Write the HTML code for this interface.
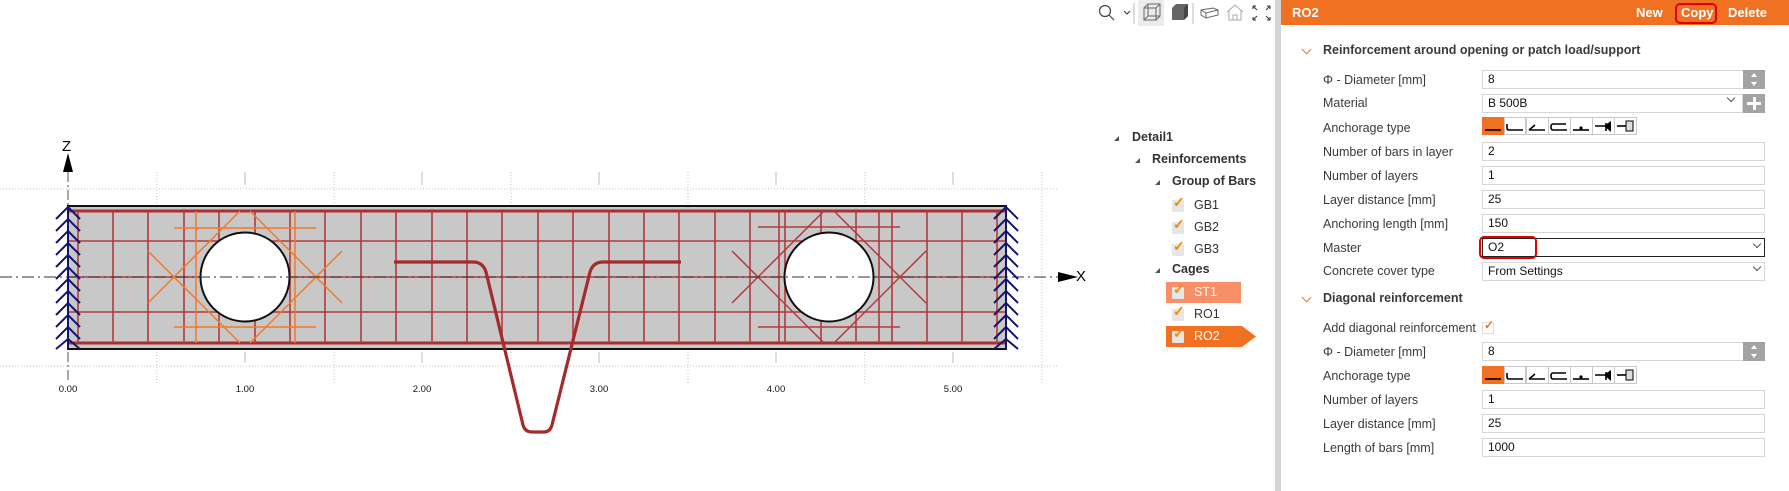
<!DOCTYPE html>
<html><head><meta charset="utf-8">
<style>
*{margin:0;padding:0;box-sizing:border-box}
body{width:1789px;height:491px;background:#fff;position:relative;overflow:hidden;font-family:"Liberation Sans",sans-serif;color:#333}
.a{position:absolute}
.lbl{position:absolute;left:1323px;font-size:12.5px;color:#3a3a3a;line-height:16px}
.inp{position:absolute;left:1482px;width:283px;height:19px;border:1px solid #d6d6d6;font-size:12px;line-height:17px;padding-left:5px;color:#111;background:#fff}
.sec{position:absolute;left:1323px;font-size:12.5px;font-weight:bold;color:#3a3a3a}
.chev{position:absolute;left:1303px;width:7px;height:7px;border-right:1.3px solid #f07122;border-bottom:1.3px solid #f07122;transform:rotate(45deg)}
.tr{position:absolute;font-size:12.5px;color:#333}
.cb{position:absolute;width:12px;height:12px;background:#e6e6e6;border-radius:1px}
</style></head><body>

<svg class="a" style="left:0;top:0" width="1275" height="491" xmlns="http://www.w3.org/2000/svg">
 <!-- grid dotted -->
 <g stroke="#c4c4c4" stroke-width="1" stroke-dasharray="1,2">
  <line x1="0" y1="189" x2="1058" y2="189"/>
  <line x1="0" y1="366" x2="1058" y2="366"/>
  <line x1="157" y1="172" x2="157" y2="383"/>
  <line x1="334" y1="172" x2="334" y2="383"/>
  <line x1="511" y1="172" x2="511" y2="383"/>
  <line x1="688" y1="172" x2="688" y2="383"/>
  <line x1="865" y1="172" x2="865" y2="383"/>
  <line x1="1042" y1="172" x2="1042" y2="383"/>
 </g>
 <g stroke="#bdbdbd" stroke-width="1">
  <line x1="245" y1="172" x2="245" y2="185"/><line x1="245" y1="352" x2="245" y2="363"/>
  <line x1="422" y1="172" x2="422" y2="185"/><line x1="422" y1="352" x2="422" y2="363"/>
  <line x1="599" y1="172" x2="599" y2="185"/><line x1="599" y1="352" x2="599" y2="363"/>
  <line x1="776" y1="172" x2="776" y2="185"/><line x1="776" y1="352" x2="776" y2="363"/>
  <line x1="953" y1="172" x2="953" y2="185"/><line x1="953" y1="352" x2="953" y2="363"/>
 </g>
 <line x1="68" y1="172" x2="68" y2="383" stroke="#555" stroke-dasharray="10,3,2,3"/>
 <!-- beam -->
 <rect x="68" y="206" width="938" height="143" fill="#c8c8c8" stroke="#111" stroke-width="2"/>
 <!-- red grid -->
 <g stroke="#b23a3a" stroke-width="1.6">
  <line x1="68" y1="241" x2="1006" y2="241"/>
  <line x1="68" y1="312" x2="1006" y2="312"/>
  <line x1="68" y1="277" x2="1006" y2="277"/>
 </g>
 <g stroke="#ab2f2f" stroke-width="3">
  <line x1="68" y1="211" x2="1006" y2="211"/>
  <line x1="68" y1="343" x2="1006" y2="343"/>
 </g>
 <g stroke="#b23a3a" stroke-width="1.6" id="verts">
  <line x1="78" y1="211" x2="78" y2="343"/><line x1="113" y1="211" x2="113" y2="343"/><line x1="148" y1="211" x2="148" y2="343"/><line x1="184" y1="211" x2="184" y2="343"/><line x1="219" y1="211" x2="219" y2="343"/><line x1="255" y1="211" x2="255" y2="343"/><line x1="290" y1="211" x2="290" y2="343"/><line x1="325" y1="211" x2="325" y2="343"/><line x1="361" y1="211" x2="361" y2="343"/><line x1="396" y1="211" x2="396" y2="343"/><line x1="432" y1="211" x2="432" y2="343"/><line x1="467" y1="211" x2="467" y2="343"/><line x1="502" y1="211" x2="502" y2="343"/><line x1="538" y1="211" x2="538" y2="343"/><line x1="573" y1="211" x2="573" y2="343"/><line x1="609" y1="211" x2="609" y2="343"/><line x1="644" y1="211" x2="644" y2="343"/><line x1="679" y1="211" x2="679" y2="343"/><line x1="715" y1="211" x2="715" y2="343"/><line x1="750" y1="211" x2="750" y2="343"/><line x1="779" y1="211" x2="779" y2="343"/><line x1="785" y1="211" x2="785" y2="343"/><line x1="821" y1="211" x2="821" y2="343"/><line x1="856" y1="211" x2="856" y2="343"/><line x1="879" y1="211" x2="879" y2="343"/><line x1="892" y1="211" x2="892" y2="343"/><line x1="927" y1="211" x2="927" y2="343"/><line x1="962" y1="211" x2="962" y2="343"/><line x1="997" y1="211" x2="997" y2="343"/>
 </g>
 <!-- orange cage hole 1 -->
 <g stroke="#f07a2a" stroke-width="1.5">
  <line x1="174" y1="228" x2="316" y2="228"/><line x1="174" y1="327" x2="316" y2="327"/>
  <line x1="196" y1="211" x2="196" y2="343"/><line x1="295" y1="211" x2="295" y2="343"/>
  <line x1="148" y1="251" x2="240" y2="343"/><line x1="148" y1="303" x2="240" y2="211"/>
  <line x1="342" y1="251" x2="250" y2="343"/><line x1="342" y1="303" x2="250" y2="211"/>
 </g>
 <!-- red cage hole 2 -->
 <g stroke="#b23a3a" stroke-width="1.5">
  <line x1="758" y1="227" x2="900" y2="227"/><line x1="758" y1="327" x2="900" y2="327"/>
  <line x1="732" y1="251" x2="824" y2="343"/><line x1="732" y1="303" x2="824" y2="211"/>
  <line x1="926" y1="251" x2="834" y2="343"/><line x1="926" y1="303" x2="834" y2="211"/>
 </g>
 <!-- holes -->
 <circle cx="245" cy="277" r="44.5" fill="#fff" stroke="#111" stroke-width="2"/>
 <circle cx="829" cy="277" r="44.5" fill="#fff" stroke="#111" stroke-width="2"/>
 <!-- axis -->
 <line x1="0" y1="277" x2="1066" y2="277" stroke="#333" stroke-width="1" stroke-dasharray="12,4,2,4"/>
 <polygon points="1058,272 1078,277 1058,282" fill="#000"/>
 <text x="1076" y="277" font-size="15" font-family="Liberation Sans" fill="#000" dominant-baseline="middle">X</text>
 <polygon points="63,172 68,153 73,172" fill="#000"/>
 <text x="62" y="151" font-size="15" font-family="Liberation Sans" fill="#000">Z</text>
 <!-- V bar -->
 <path d="M394 262 H473 Q483 262 486 272 L523 425 Q525 432 532 432 H544 Q550 432 552 425 L590 272 Q593 262 603 262 H681" fill="none" stroke="#a52a2a" stroke-width="3.2" stroke-linejoin="round"/>
 <!-- supports -->
 <g fill="none" stroke="#14146e" stroke-width="2">
  <line x1="68" y1="206" x2="68" y2="349"/>
  <line x1="1006" y1="206" x2="1006" y2="349"/>
  <path d="M56 219 L68 207 L80 219 M56 231 L68 219 L80 231 M56 243 L68 231 L80 243 M56 255 L68 243 L80 255 M56 267 L68 255 L80 267 M56 279 L68 267 L80 279 M56 291 L68 279 L80 291 M56 303 L68 291 L80 303 M56 315 L68 303 L80 315 M56 327 L68 315 L80 327 M56 339 L68 327 L80 339 M56 349 L68 339 L80 349"/>
  <path transform="translate(938,0)" d="M56 219 L68 207 L80 219 M56 231 L68 219 L80 231 M56 243 L68 231 L80 243 M56 255 L68 243 L80 255 M56 267 L68 255 L80 267 M56 279 L68 267 L80 279 M56 291 L68 279 L80 291 M56 303 L68 291 L80 303 M56 315 L68 303 L80 315 M56 327 L68 315 L80 327 M56 339 L68 327 L80 339 M56 349 L68 339 L80 349"/>
 </g>
 <g font-size="9.5" font-family="Liberation Sans" fill="#111" text-anchor="middle">
  <text x="68" y="392">0.00</text><text x="245" y="392">1.00</text><text x="422" y="392">2.00</text><text x="599" y="392">3.00</text><text x="776" y="392">4.00</text><text x="953" y="392">5.00</text>
 </g>
 <!-- toolbar -->
 <rect x="1138" y="0" width="26" height="26" fill="#ebebeb"/>
 <g fill="none" stroke="#444" stroke-width="1.2">
  <circle cx="1105" cy="11" r="5.5"/><line x1="1109" y1="15" x2="1114" y2="20"/>
  <polyline points="1124,11 1127,14 1130,11"/>
 </g>
 <line x1="1134" y1="3" x2="1134" y2="24" stroke="#bbb"/>
 <line x1="1193" y1="3" x2="1193" y2="24" stroke="#bbb"/>
 <g fill="none" stroke="#666" stroke-width="1">
  <rect x="1144" y="8" width="12" height="12"/><polyline points="1144,8 1148,4 1160,4 1160,16 1156,20"/><line x1="1156" y1="8" x2="1160" y2="4"/>
  <polyline points="1148,4 1148,16 1144,20"/><line x1="1148" y1="16" x2="1160" y2="16"/>
  <path d="M1201 10 L1213 8 L1218 10 L1218 15 L1206 18 L1201 15 Z M1201 10 L1206 13 L1218 10 M1206 13 L1206 18"/>
 </g>
 <path d="M1172 8 L1176 4 L1188 4 L1188 16 L1184 20 L1172 20 Z" fill="#666"/>
 <path d="M1184 8 L1188 4 L1188 16 L1184 20 Z" fill="#444"/>
 <path d="M1227 12 L1235 5 L1243 12 M1229 10 V20 H1241 V10 M1233 20 V15 H1237 V20" fill="none" stroke="#aaa" stroke-width="1"/>
 <g fill="none" stroke="#333" stroke-width="1">
  <path d="M1253 6 L1257 10 M1253 6 H1256 M1253 6 V9"/>
  <path d="M1270 6 L1266 10 M1270 6 H1267 M1270 6 V9"/>
  <path d="M1253 20 L1257 16 M1253 20 H1256 M1253 20 V17"/>
  <path d="M1270 20 L1266 16 M1270 20 H1267 M1270 20 V17"/>
 </g>
 <!-- tree -->
 <g fill="#555"><polygon points="1114,141 1119,136 1119,141"/><polygon points="1135,163 1140,158 1140,163"/><polygon points="1155,185 1160,180 1160,185"/><polygon points="1155,273 1160,268 1160,273"/></g>
 <rect x="1166" y="282" width="75" height="21" fill="#f79068"/>
 <polygon points="1166,326 1242,326 1256,336.5 1242,347 1166,347" fill="#f07122"/>
</svg>

<div class="tr" style="left:1132px;top:130px;font-weight:bold">Detail1</div>
<div class="tr" style="left:1152px;top:152px;font-weight:bold">Reinforcements</div>
<div class="tr" style="left:1172px;top:174px;font-weight:bold">Group of Bars</div>
<div class="tr" style="left:1172px;top:262px;font-weight:bold">Cages</div>
<div class="cb" style="left:1172px;top:200px"></div><div class="tr" style="left:1173px;top:194px;color:#f08a00;font-size:14px;font-weight:bold">✓</div><div class="tr" style="left:1194px;top:198px">GB1</div>
<div class="cb" style="left:1172px;top:222px"></div><div class="tr" style="left:1173px;top:216px;color:#f08a00;font-size:14px;font-weight:bold">✓</div><div class="tr" style="left:1194px;top:220px">GB2</div>
<div class="cb" style="left:1172px;top:244px"></div><div class="tr" style="left:1173px;top:238px;color:#f08a00;font-size:14px;font-weight:bold">✓</div><div class="tr" style="left:1194px;top:242px">GB3</div>
<div class="cb" style="left:1172px;top:287px"></div><div class="tr" style="left:1173px;top:281px;color:#f08a00;font-size:14px;font-weight:bold">✓</div><div class="tr" style="left:1194px;top:285px;color:#fff">ST1</div>
<div class="cb" style="left:1172px;top:309px"></div><div class="tr" style="left:1173px;top:303px;color:#f08a00;font-size:14px;font-weight:bold">✓</div><div class="tr" style="left:1194px;top:307px">RO1</div>
<div class="cb" style="left:1172px;top:331px"></div><div class="tr" style="left:1173px;top:325px;color:#f08a00;font-size:14px;font-weight:bold">✓</div><div class="tr" style="left:1194px;top:329px;color:#fff">RO2</div>

<!-- panel -->
<div class="a" style="left:1275px;top:0;width:6px;height:491px;background:#d4d4d4"></div>
<div class="a" style="left:1281px;top:0;width:508px;height:25px;background:#f07122"></div>
<div class="a" style="left:1292px;top:5px;color:#fff;font-weight:bold;font-size:13px">RO2</div>
<div class="a" style="left:1636px;top:5px;color:#fff;font-weight:bold;font-size:13px">New</div>
<div class="a" style="left:1675px;top:3px;width:42px;height:21px;border:2.5px solid #e00000;border-radius:5px"></div>
<div class="a" style="left:1681px;top:5px;color:#fff;font-weight:bold;font-size:13px">Copy</div>
<div class="a" style="left:1728px;top:5px;color:#fff;font-weight:bold;font-size:13px">Delete</div>

<div class="chev" style="top:46px"></div>
<div class="sec" style="top:43px">Reinforcement around opening or patch load/support</div>

<div class="lbl" style="top:72px">Φ - Diameter [mm]</div><div class="inp" style="top:70px">8</div>
<div class="a" style="left:1743px;top:70px;width:22px;height:19px;background:#a3a3a3"></div>
<div class="a" style="left:1751px;top:73px;border:3px solid transparent;border-bottom:4px solid #fff;border-top:0"></div>
<div class="a" style="left:1751px;top:82px;border:3px solid transparent;border-top:4px solid #fff;border-bottom:0"></div>

<div class="lbl" style="top:95px">Material</div><div class="inp" style="top:94px;width:261px">B 500B</div>
<div class="a" style="left:1728px;top:95px;width:6px;height:6px;border-right:1px solid #555;border-bottom:1px solid #555;transform:rotate(45deg)"></div>
<div class="a" style="left:1743px;top:94px;width:22px;height:19px;background:#a3a3a3"></div>
<div class="a" style="left:1747px;top:102px;width:14px;height:3px;background:#fff"></div>
<div class="a" style="left:1752.5px;top:97px;width:3px;height:13px;background:#fff"></div>

<div class="lbl" style="top:120px">Anchorage type</div>
<svg class="a" style="left:1482px;top:117px" width="156" height="18" xmlns="http://www.w3.org/2000/svg">
 <rect x="0" y="0" width="22" height="18" fill="#f07122"/>
 <g fill="none" stroke="#c8c8c8"><rect x="22.5" y="0.5" width="21" height="17"/><rect x="44.5" y="0.5" width="22" height="17"/><rect x="66.5" y="0.5" width="22" height="17"/><rect x="88.5" y="0.5" width="22" height="17"/><rect x="110.5" y="0.5" width="22" height="17"/><rect x="132.5" y="0.5" width="22" height="17"/></g>
 <g fill="none" stroke="#000" stroke-width="1.6">
  <line x1="3" y1="13" x2="19" y2="13"/>
  <path d="M25 7 V11 Q25 13 27 13 H41"/>
  <path d="M47 13 L53 8 M47 13 H63"/>
  <path d="M84 7 H71 Q69 7 69 10 Q69 13 71 13 H85"/>
  <path d="M91 13 H107"/>
  <path d="M113 9 H124 M124 6 V14"/>
  <path d="M135 9 H144"/>
 </g>
 <circle cx="99" cy="11" r="1.6" fill="#000"/>
 <path d="M122 9 L129 4 V15 Z" fill="#000"/>
 <rect x="144" y="4" width="7" height="10" fill="#ddd" stroke="#000"/>
</svg>

<div class="lbl" style="top:144px">Number of bars in layer</div><div class="inp" style="top:142px">2</div>
<div class="lbl" style="top:168px">Number of layers</div><div class="inp" style="top:166px">1</div>
<div class="lbl" style="top:192px">Layer distance [mm]</div><div class="inp" style="top:190px">25</div>
<div class="lbl" style="top:216px">Anchoring length [mm]</div><div class="inp" style="top:214px">150</div>
<div class="lbl" style="top:240px">Master</div><div class="inp" style="top:238px;border-color:#222">O2</div>
<div class="a" style="left:1754px;top:241px;width:6px;height:6px;border-right:1px solid #555;border-bottom:1px solid #555;transform:rotate(45deg)"></div>
<div class="a" style="left:1479px;top:236px;width:58px;height:23px;border:2.5px solid #e00000;border-radius:5px"></div>
<div class="lbl" style="top:263px">Concrete cover type</div><div class="inp" style="top:262px">From Settings</div>
<div class="a" style="left:1754px;top:264px;width:6px;height:6px;border-right:1px solid #555;border-bottom:1px solid #555;transform:rotate(45deg)"></div>

<div class="chev" style="top:294px"></div>
<div class="sec" style="top:291px">Diagonal reinforcement</div>
<div class="lbl" style="top:320px">Add diagonal reinforcement</div>
<div class="a" style="left:1482px;top:322px;width:12px;height:12px;border:1px solid #ddd"></div>
<div class="a" style="left:1484px;top:318px;color:#f07122;font-size:12px;font-weight:bold">✓</div>
<div class="lbl" style="top:344px">Φ - Diameter [mm]</div><div class="inp" style="top:342px">8</div>
<div class="a" style="left:1743px;top:342px;width:22px;height:19px;background:#a3a3a3"></div>
<div class="a" style="left:1751px;top:345px;border:3px solid transparent;border-bottom:4px solid #fff;border-top:0"></div>
<div class="a" style="left:1751px;top:354px;border:3px solid transparent;border-top:4px solid #fff;border-bottom:0"></div>
<div class="lbl" style="top:368px">Anchorage type</div>
<svg class="a" style="left:1482px;top:366px" width="156" height="18" xmlns="http://www.w3.org/2000/svg">
 <rect x="0" y="0" width="22" height="18" fill="#f07122"/>
 <g fill="none" stroke="#c8c8c8"><rect x="22.5" y="0.5" width="21" height="17"/><rect x="44.5" y="0.5" width="22" height="17"/><rect x="66.5" y="0.5" width="22" height="17"/><rect x="88.5" y="0.5" width="22" height="17"/><rect x="110.5" y="0.5" width="22" height="17"/><rect x="132.5" y="0.5" width="22" height="17"/></g>
 <g fill="none" stroke="#000" stroke-width="1.6">
  <line x1="3" y1="13" x2="19" y2="13"/>
  <path d="M25 7 V11 Q25 13 27 13 H41"/>
  <path d="M47 13 L53 8 M47 13 H63"/>
  <path d="M84 7 H71 Q69 7 69 10 Q69 13 71 13 H85"/>
  <path d="M91 13 H107"/>
  <path d="M113 9 H124 M124 6 V14"/>
  <path d="M135 9 H144"/>
 </g>
 <circle cx="99" cy="11" r="1.6" fill="#000"/>
 <path d="M122 9 L129 4 V15 Z" fill="#000"/>
 <rect x="144" y="4" width="7" height="10" fill="#ddd" stroke="#000"/>
</svg>
<div class="lbl" style="top:392px">Number of layers</div><div class="inp" style="top:390px">1</div>
<div class="lbl" style="top:416px">Layer distance [mm]</div><div class="inp" style="top:414px">25</div>
<div class="lbl" style="top:440px">Length of bars [mm]</div><div class="inp" style="top:438px">1000</div>
</body></html>
